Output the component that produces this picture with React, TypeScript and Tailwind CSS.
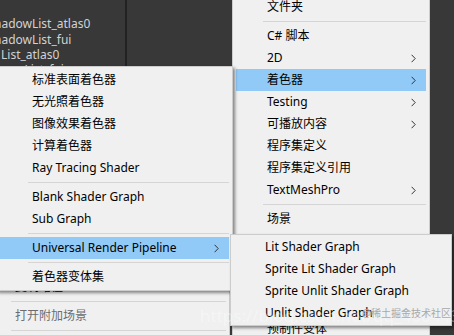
import React from 'react';

type Entry =
  | { kind: 'item'; label: string; arrow?: boolean; active?: boolean; disabled?: boolean; shortcut?: string }
  | { kind: 'sep' };

const item = (label: string, opts: Partial<{ arrow: boolean; active: boolean; disabled: boolean; shortcut: string }> = {}): Entry => ({
  kind: 'item',
  label,
  ...opts,
});
const sep: Entry = { kind: 'sep' };

function Chevron() {
  return (
    <svg viewBox="0 0 5 9" className="w-[5px] h-[9px]" fill="none" stroke="#333" strokeWidth="1">
      <path d="M0.6 0.8 L4.2 4.5 L0.6 8.2" />
    </svg>
  );
}

function MenuRows({ entries, textPad, sepPad }: { entries: Entry[]; textPad: string; sepPad: string }) {
  return (
    <>
      {entries.map((e, i) =>
        e.kind === 'sep' ? (
          <div key={i} className={`h-[7px] flex items-center ${sepPad}`}>
            <div className="h-px flex-1 bg-[#d5d5d5]" />
          </div>
        ) : (
          <div
            key={i}
            className={`h-[22px] flex items-center pr-[10px] ${textPad} ${e.active ? 'bg-[#91c9f7]' : ''} ${
              e.disabled ? 'text-[#6d6d6d]' : 'text-[#000]'
            }`}
          >
            <span className="flex-1 whitespace-nowrap">{e.label}</span>
            {e.shortcut && <span className="whitespace-nowrap mr-[10px]">{e.shortcut}</span>}
            {e.arrow && <Chevron />}
          </div>
        )
      )}
    </>
  );
}

const mainMenu: Entry[] = [
  item('文件夹'),
  sep,
  item('C# 脚本'),
  item('2D', { arrow: true }),
  item('着色器', { arrow: true, active: true }),
  item('Testing', { arrow: true }),
  item('可播放内容', { arrow: true }),
  item('程序集定义'),
  item('程序集定义引用'),
  item('TextMeshPro', { arrow: true }),
  sep,
  item('场景'),
  item('预制件'),
  item('动画器控制器'),
  item('动画'),
  item('动画器覆盖控制器'),
  item('预制件变体'),
];

const shaderMenu: Entry[] = [
  item('标准表面着色器'),
  item('无光照着色器'),
  item('图像效果着色器'),
  item('计算着色器'),
  item('Ray Tracing Shader'),
  sep,
  item('Blank Shader Graph'),
  item('Sub Graph'),
  sep,
  item('Universal Render Pipeline', { arrow: true, active: true }),
  sep,
  item('着色器变体集'),
];

const urpMenu: Entry[] = [
  item('Lit Shader Graph'),
  item('Sprite Lit Shader Graph'),
  item('Sprite Unlit Shader Graph'),
  item('Unlit Shader Graph'),
];

const backMenu: Entry[] = [
  item('复制路径', { shortcut: 'Alt+Ctrl+C' }),
  sep,
  item('打开附加场景', { disabled: true }),
  sep,
  item('查看包中的依赖'),
];

export default function App() {
  return (
    <div className="relative w-[454px] h-[335px] overflow-hidden bg-[#383838] text-[12px] font-['Noto_Sans','Noto_Sans_CJK_SC',sans-serif]">
      {/* project panel behind */}
      <div className="flex h-full">
        <div className="w-[127px] border-r-2 border-[#222222] pt-[16px] text-[#d2d2d2] overflow-hidden">
          <div className="h-[16px] leading-[16px] whitespace-nowrap ml-[-6px]">hadowList_atlas0</div>
          <div className="h-[16px] leading-[16px] whitespace-nowrap ml-[-6px]">hadowList_fui</div>
          <div className="h-[14px] leading-[14px] whitespace-nowrap ml-[1px]">List_atlas0</div>
          <div className="h-[16px] leading-[16px] whitespace-nowrap ml-[8px]">owList_fui</div>
        </div>
        <div className="flex-1" />
      </div>

      {/* context menu behind (bottom left) */}
      <div className="absolute left-[-10px] top-[274px] w-[240px] bg-[#f0f0f0] border border-[#cccccc] py-[1px] px-[3px]">
        <MenuRows entries={backMenu} textPad="pl-[21px]" sepPad="pl-[17px]" />
      </div>

      {/* Create menu */}
      <div className="absolute left-[232px] top-[-8px] w-[198px] bg-[#f0f0f0] border border-[#cccccc] p-[3px]">
        <MenuRows entries={mainMenu} textPad="pl-[31px]" sepPad="pl-[27px]" />
      </div>

      {/* Shader submenu */}
      <div className="absolute left-[-4px] top-[66px] w-[237px] bg-[#f0f0f0] border border-[#cccccc] py-[2px] px-[3px] shadow-[2px_2px_3px_rgba(0,0,0,0.45)] z-10">
        <MenuRows entries={shaderMenu} textPad="pl-[32px]" sepPad="pl-[28px]" />
      </div>

      {/* URP submenu */}
      <div className="absolute left-[230px] top-[234px] w-[222px] bg-[#f0f0f0] border border-[#cccccc] py-[1px] px-[3px] shadow-[2px_2px_3px_rgba(0,0,0,0.45)] z-10">
        <MenuRows entries={urpMenu} textPad="pl-[31px]" sepPad="pl-[27px]" />
      </div>

      {/* watermarks */}
      <div className="absolute left-[200px] top-[303px] z-20 text-[17px] text-white/35 whitespace-nowrap">
        https://blog.csdn.net/qq_46044366
      </div>
      <div className="absolute left-[362px] top-[306px] z-20 text-[10px] text-[#a9a9a9] whitespace-nowrap">
        @稀土掘金技术社区
      </div>
    </div>
  );
}
